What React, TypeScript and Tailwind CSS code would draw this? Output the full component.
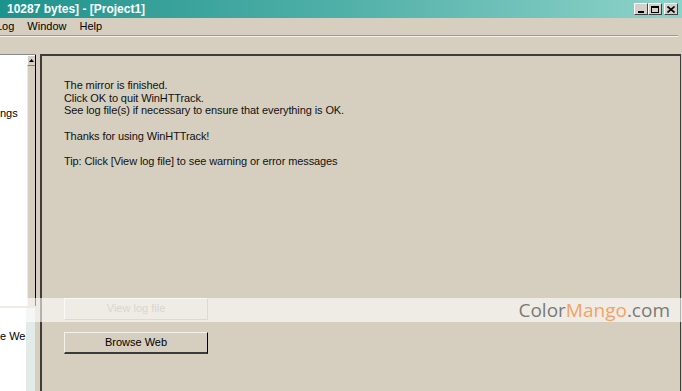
import React from "react";

function CapBtn({ children, className = "" }: { children: React.ReactNode; className?: string }) {
  return (
    <div
      className={
        "w-[14px] h-[12px] bg-[#d4d0c8] border-t border-l border-t-white border-l-white border-b border-r border-b-[#404040] border-r-[#404040] flex items-center justify-center " +
        className
      }
    >
      {children}
    </div>
  );
}

export default function App() {
  return (
    <div className="w-[682px] h-[391px] overflow-hidden relative bg-[#d6cfbf] flex flex-col font-['Liberation_Sans',Arial,sans-serif] text-black">
      {/* Title bar */}
      <div className="h-[18px] flex items-center bg-gradient-to-r from-[#1b938d] via-[#4fb0a8] to-[#8ed3ca] pl-[7px] pr-[4px] shrink-0">
        <span className="text-white font-bold text-[12px] leading-none">10287 bytes] - [Project1]</span>
        <div className="ml-auto flex items-center">
          <CapBtn>
            <div className="w-[6px] h-[2px] bg-black mt-[6px] -ml-[1px]" />
          </CapBtn>
          <CapBtn>
            <div className="w-[8px] h-[7px] border border-black border-t-2" />
          </CapBtn>
          <CapBtn className="ml-[2px]">
            <svg width="8" height="7" viewBox="0 0 8 7">
              <path d="M0.5 0.5 L7.5 6.5 M7.5 0.5 L0.5 6.5" stroke="black" strokeWidth="1.6" />
            </svg>
          </CapBtn>
        </div>
      </div>

      {/* Menu bar */}
      <div className="h-[17px] flex items-center gap-[13px] text-[11px] leading-none shrink-0 overflow-hidden">
        <span className="-ml-[4px]">Log</span>
        <span>Window</span>
        <span>Help</span>
      </div>
      <div className="h-[1px] bg-[#9c9a94] mr-[4px] shrink-0" />
      <div className="h-[1px] bg-[#f4f1ea] mr-[4px] shrink-0" />

      {/* Toolbar area */}
      <div className="h-[17px] shrink-0" />

      {/* Main */}
      <div className="flex-1 flex min-h-0">
        {/* Left column */}
        <div className="w-[40px] flex flex-col shrink-0">
          <div className="h-[252px] flex border-t border-[#8a8a8a] w-[36px]">
            <div className="w-[27px] bg-white text-[11px] leading-[13px] overflow-hidden">
              <div className="mt-[52px] whitespace-nowrap">ngs</div>
            </div>
            <div className="w-[8px] flex flex-col bg-[#d6cfbf]">
              <div className="h-[11px] bg-[#d4d0c8] border-t border-l border-white border-b border-b-[#808080] flex items-center justify-center">
                <svg width="5" height="3" viewBox="0 0 5 3">
                  <path d="M2.5 0 L5 3 L0 3 Z" fill="black" />
                </svg>
              </div>
              <div className="flex-1 border-l border-[#efeadf]" />
            </div>
            <div className="w-[1px] bg-black" />
          </div>
          <div className="h-[2px]" />
          <div className="flex-1 flex w-[35px]">
            <div className="w-[26px] bg-white text-[11px] leading-[13px] overflow-hidden">
              <div className="mt-[22px] whitespace-nowrap">e We</div>
            </div>
            <div className="w-[9px] bg-[#e3ebe8]" />
          </div>
        </div>

        {/* Right panel */}
        <div className="flex-1 mr-[1px] border-l-2 border-t-2 border-r border-[#3e3d3a] flex flex-col pl-[22px] pt-[23px]">
          <div className="text-[11px] leading-[12.67px] text-[#111] tracking-[-0.1px]">
            <div>The mirror is finished.</div>
            <div>Click OK to quit WinHTTrack.</div>
            <div>See log file(s) if necessary to ensure that everything is OK.</div>
            <div>&nbsp;</div>
            <div>Thanks for using WinHTTrack!</div>
            <div>&nbsp;</div>
            <div>Tip: Click [View log file] to see warning or error messages</div>
          </div>
          <div className="mt-[130px] w-[144px] h-[22px] border border-[#f2efe8] border-b-[#a8a49a] border-r-[#a8a49a] flex items-center justify-center text-[11px] text-[#9a968c]">
            View log file
          </div>
          <div className="mt-[12px] w-[144px] h-[22px] border-t border-l border-t-[#f4f1ea] border-l-[#f4f1ea] border-b-2 border-r border-b-[#3a3a3a] border-r-black flex items-center justify-center text-[11px]">
            Browse Web
          </div>
        </div>
      </div>

      {/* Watermark band */}
      <div className="absolute left-0 right-0 top-[298px] h-[24px] bg-white/60 flex items-center justify-end pr-[12px]">
        <span className="font-['Open_Sans',sans-serif] text-[19px] leading-none text-[#7a7a7a]">
          Color<span className="text-[#f5a266]">Mango</span>.com
        </span>
      </div>
    </div>
  );
}
